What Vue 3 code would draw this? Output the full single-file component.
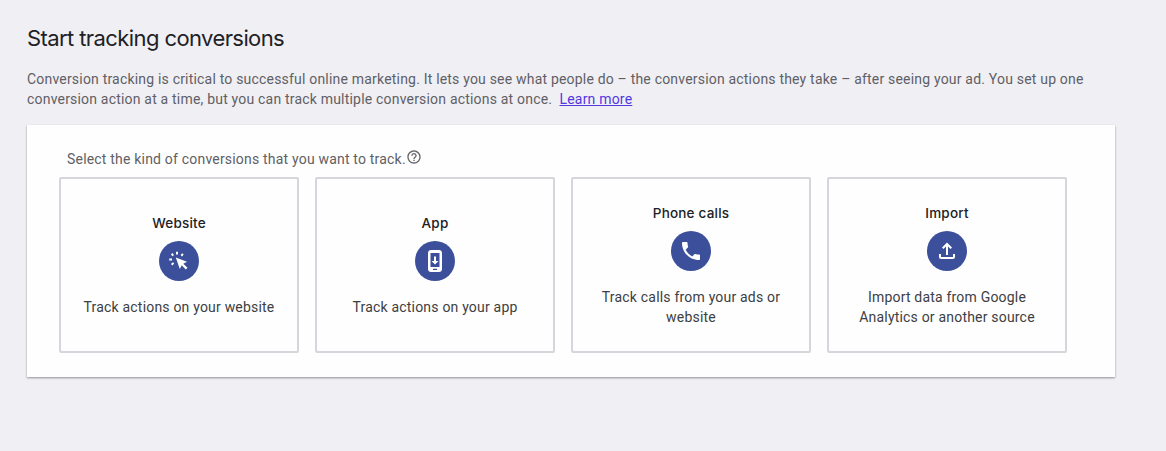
<template>
    <div class="page">
        <h1 class="title">Start tracking conversions</h1>
        <p class="intro">
            Conversion tracking is critical to successful online marketing. It lets you see what people do – the conversion actions they take – after seeing your ad. You set up one<br />
            conversion action at a time, but you can track multiple conversion actions at once.&nbsp; <a href="#" class="learnMore" @click.prevent>Learn more</a>
        </p>

        <div class="panel">
            <div class="question">
                <span>Select the kind of conversions that you want to track.</span>
                <svg class="help" viewBox="0 0 24 24">
                    <path d="M11 18h2v-2h-2v2zm1-16C6.48 2 2 6.48 2 12s4.48 10 10 10 10-4.48 10-10S17.52 2 12 2zm0 18c-4.41 0-8-3.59-8-8s3.59-8 8-8 8 3.59 8 8-3.59 8-8 8zm0-14c-2.21 0-4 1.79-4 4h2c0-1.1.9-2 2-2s2 .9 2 2c0 2-3 1.75-3 5h2c0-2.25 3-2.5 3-5 0-2.21-1.79-4-4-4z" />
                </svg>
            </div>

            <div class="cards">
                <button v-for="item in items" :key="item.name" class="card" :class="{ selected: selected === item.name }" @click="selected = item.name">
                    <span class="name">{{ item.name }}</span>
                    <span class="circle">
                        <svg class="icon" viewBox="0 0 24 24">
                            <path :d="item.icon" fill-rule="evenodd" />
                        </svg>
                    </span>
                    <span class="text">{{ item.text }}</span>
                </button>
            </div>
        </div>
    </div>
</template>

<script setup>
import { ref } from 'vue'

const selected = ref('')

const items = [
    {
        name: 'Website',
        text: 'Track actions on your website',
        icon: 'M8.8 8.6l11.2 4.1-3.7 2 4.2 4.1-1.7 1.7-4.1-4.2-1.9 3.7zM9 2.8h2v2.8H9zM2.2 9.4H5v2H2.2zM13.6 6l1.6-1.8 1.5 1.4L15 7.4zM3.9 5.5l1.4-1.4L7 5.9 5.6 7.3zM4 15l1.8-1.8 1.4 1.4-1.8 1.8z'
    },
    {
        name: 'App',
        text: 'Track actions on your app',
        icon: 'M8 1h8c1.7 0 3 1.3 3 3v16c0 1.7-1.3 3-3 3H8c-1.7 0-3-1.3-3-3V4c0-1.7 1.3-3 3-3zM7.5 4v14h9V4zM11 7.5h2V12h2.5L12 15.5 8.5 12H11zM10 19.8h4v1.2h-4z'
    },
    {
        name: 'Phone calls',
        text: 'Track calls from your ads or website',
        icon: 'M6.62 10.79c1.44 2.83 3.76 5.14 6.59 6.59l2.2-2.2c.27-.27.67-.36 1.02-.24 1.12.37 2.33.57 3.57.57.55 0 1 .45 1 1V20c0 .55-.45 1-1 1-9.39 0-17-7.61-17-17 0-.55.45-1 1-1h3.5c.55 0 1 .45 1 1 0 1.25.2 2.45.57 3.57.11.35.03.74-.25 1.02l-2.2 2.2z'
    },
    {
        name: 'Import',
        text: 'Import data from Google Analytics or another source',
        icon: 'M12 3.6l5 5-1.4 1.4L13 7.4V16h-2V7.4L8.4 10 7 8.6zM4 15h2v3h12v-3h2v3c0 1.1-.9 2-2 2H6c-1.1 0-2-.9-2-2z'
    }
]
</script>

<style>
body {
    background-color: #f0eff4;
}
</style>

<style scoped>
.page {
    box-sizing: border-box;
    min-height: 451px;
    padding: 24px 51px 0 27px;
    font-family: Roboto, sans-serif;
    font-size: 14px;
    line-height: 20px;
    letter-spacing: 0.195px;
    color: #5f6065;
}

.title {
    margin: 0 0 17px;
    font-family: Inter, sans-serif;
    font-size: 22px;
    font-weight: 400;
    line-height: 28px;
    letter-spacing: -0.59px;
    color: #202124;
}

.intro {
    margin: 0 0 16px;
    white-space: nowrap;
}

.learnMore {
    color: #5038e0;
}

.panel {
    box-sizing: border-box;
    height: 252px;
    padding: 24px 32px;
    background-color: #fefefe;
    box-shadow: 0 1px 2px rgba(0, 0, 0, 0.4);
}

.question {
    display: flex;
    height: 28px;
    padding-left: 8px;
}

.help {
    width: 16px;
    height: 16px;
    fill: #66676b;
}

.cards {
    display: flex;
    gap: 16px;
}

.card {
    box-sizing: border-box;
    display: flex;
    flex-direction: column;
    align-items: center;
    justify-content: center;
    width: 240px;
    height: 176px;
    padding: 0 20px;
    background-color: #fefefe;
    border: 2px solid #d5d5dc;
    border-radius: 2px;
    font: inherit;
    letter-spacing: inherit;
    color: #3c4043;
    cursor: pointer;
}

.card.selected {
    border-color: #3c4f9b;
}

.name {
    font-family: Inter, sans-serif;
    font-size: 13.5px;
    font-weight: 500;
    letter-spacing: 0.2px;
    color: #202124;
}

.circle {
    display: flex;
    align-items: center;
    justify-content: center;
    width: 40px;
    height: 40px;
    margin: 8px 0 16px;
    background-color: #3c4f9b;
    border-radius: 50%;
}

.icon {
    width: 24px;
    height: 24px;
    fill: #fff;
}
</style>
